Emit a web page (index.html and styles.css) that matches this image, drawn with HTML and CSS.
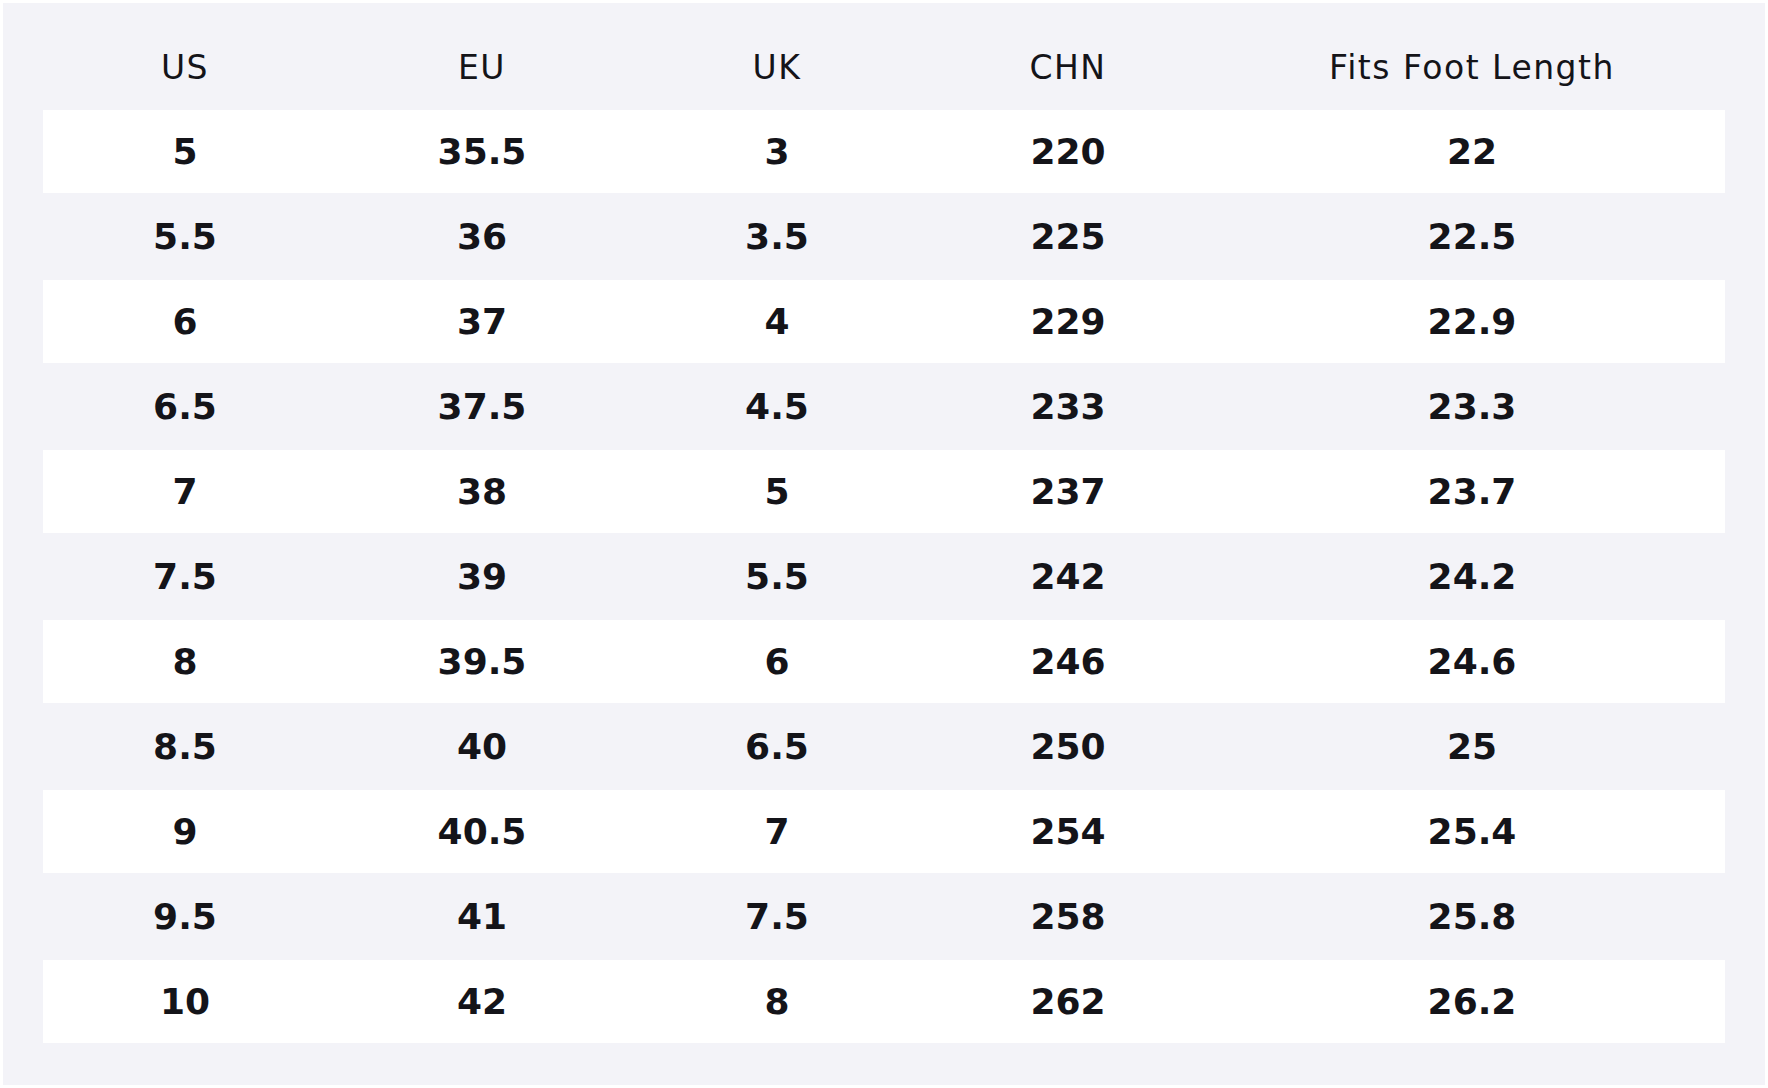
FILE: index.html
```html
<!DOCTYPE html>
<html lang="en">
<head>
<meta charset="utf-8">
<title>Size Chart</title>
<link rel="stylesheet" href="styles.css">
</head>
<body>
<div class="chart">
  <table class="size-table">
    <colgroup>
      <col class="c-us"><col class="c-eu"><col class="c-uk"><col class="c-chn"><col class="c-len">
    </colgroup>
    <thead>
      <tr><th>US</th><th>EU</th><th>UK</th><th>CHN</th><th>Fits Foot Length</th></tr>
    </thead>
    <tbody>
      <tr><td>5</td><td>35.5</td><td>3</td><td>220</td><td>22</td></tr>
      <tr><td>5.5</td><td>36</td><td>3.5</td><td>225</td><td>22.5</td></tr>
      <tr><td>6</td><td>37</td><td>4</td><td>229</td><td>22.9</td></tr>
      <tr><td>6.5</td><td>37.5</td><td>4.5</td><td>233</td><td>23.3</td></tr>
      <tr><td>7</td><td>38</td><td>5</td><td>237</td><td>23.7</td></tr>
      <tr><td>7.5</td><td>39</td><td>5.5</td><td>242</td><td>24.2</td></tr>
      <tr><td>8</td><td>39.5</td><td>6</td><td>246</td><td>24.6</td></tr>
      <tr><td>8.5</td><td>40</td><td>6.5</td><td>250</td><td>25</td></tr>
      <tr><td>9</td><td>40.5</td><td>7</td><td>254</td><td>25.4</td></tr>
      <tr><td>9.5</td><td>41</td><td>7.5</td><td>258</td><td>25.8</td></tr>
      <tr><td>10</td><td>42</td><td>8</td><td>262</td><td>26.2</td></tr>
    </tbody>
  </table>
</div>
</body>
</html>
```

FILE: styles.css
```css
html, body {
  margin: 0;
  padding: 0;
  background: #ffffff;
}

body {
  padding: 3px;
  font-family: "DejaVu Sans", "Noto Sans", sans-serif;
  color: #141419;
}

.chart {
  background: #f3f3f8;
  padding: 40px;
  height: 1082px;
  box-sizing: border-box;
}

.size-table {
  width: 100%;
  table-layout: fixed;
  border-collapse: separate;
  border-spacing: 0 2px;
  text-align: center;
}

.c-us { width: 284px; }
.c-eu { width: 310px; }
.c-uk { width: 280px; }
.c-chn { width: 302px; }
.c-len { width: 506px; }

.size-table th {
  font-weight: 400;
  font-size: 33px;
  letter-spacing: 1.5px;
  line-height: 37px;
  padding: 4px 0 22px;
}

.size-table td {
  font-weight: 700;
  font-size: 36px;
  line-height: 43px;
  padding: 20px 0;
  height: 43px;
}

.size-table tbody tr:nth-child(odd) td {
  background: #ffffff;
}
```
